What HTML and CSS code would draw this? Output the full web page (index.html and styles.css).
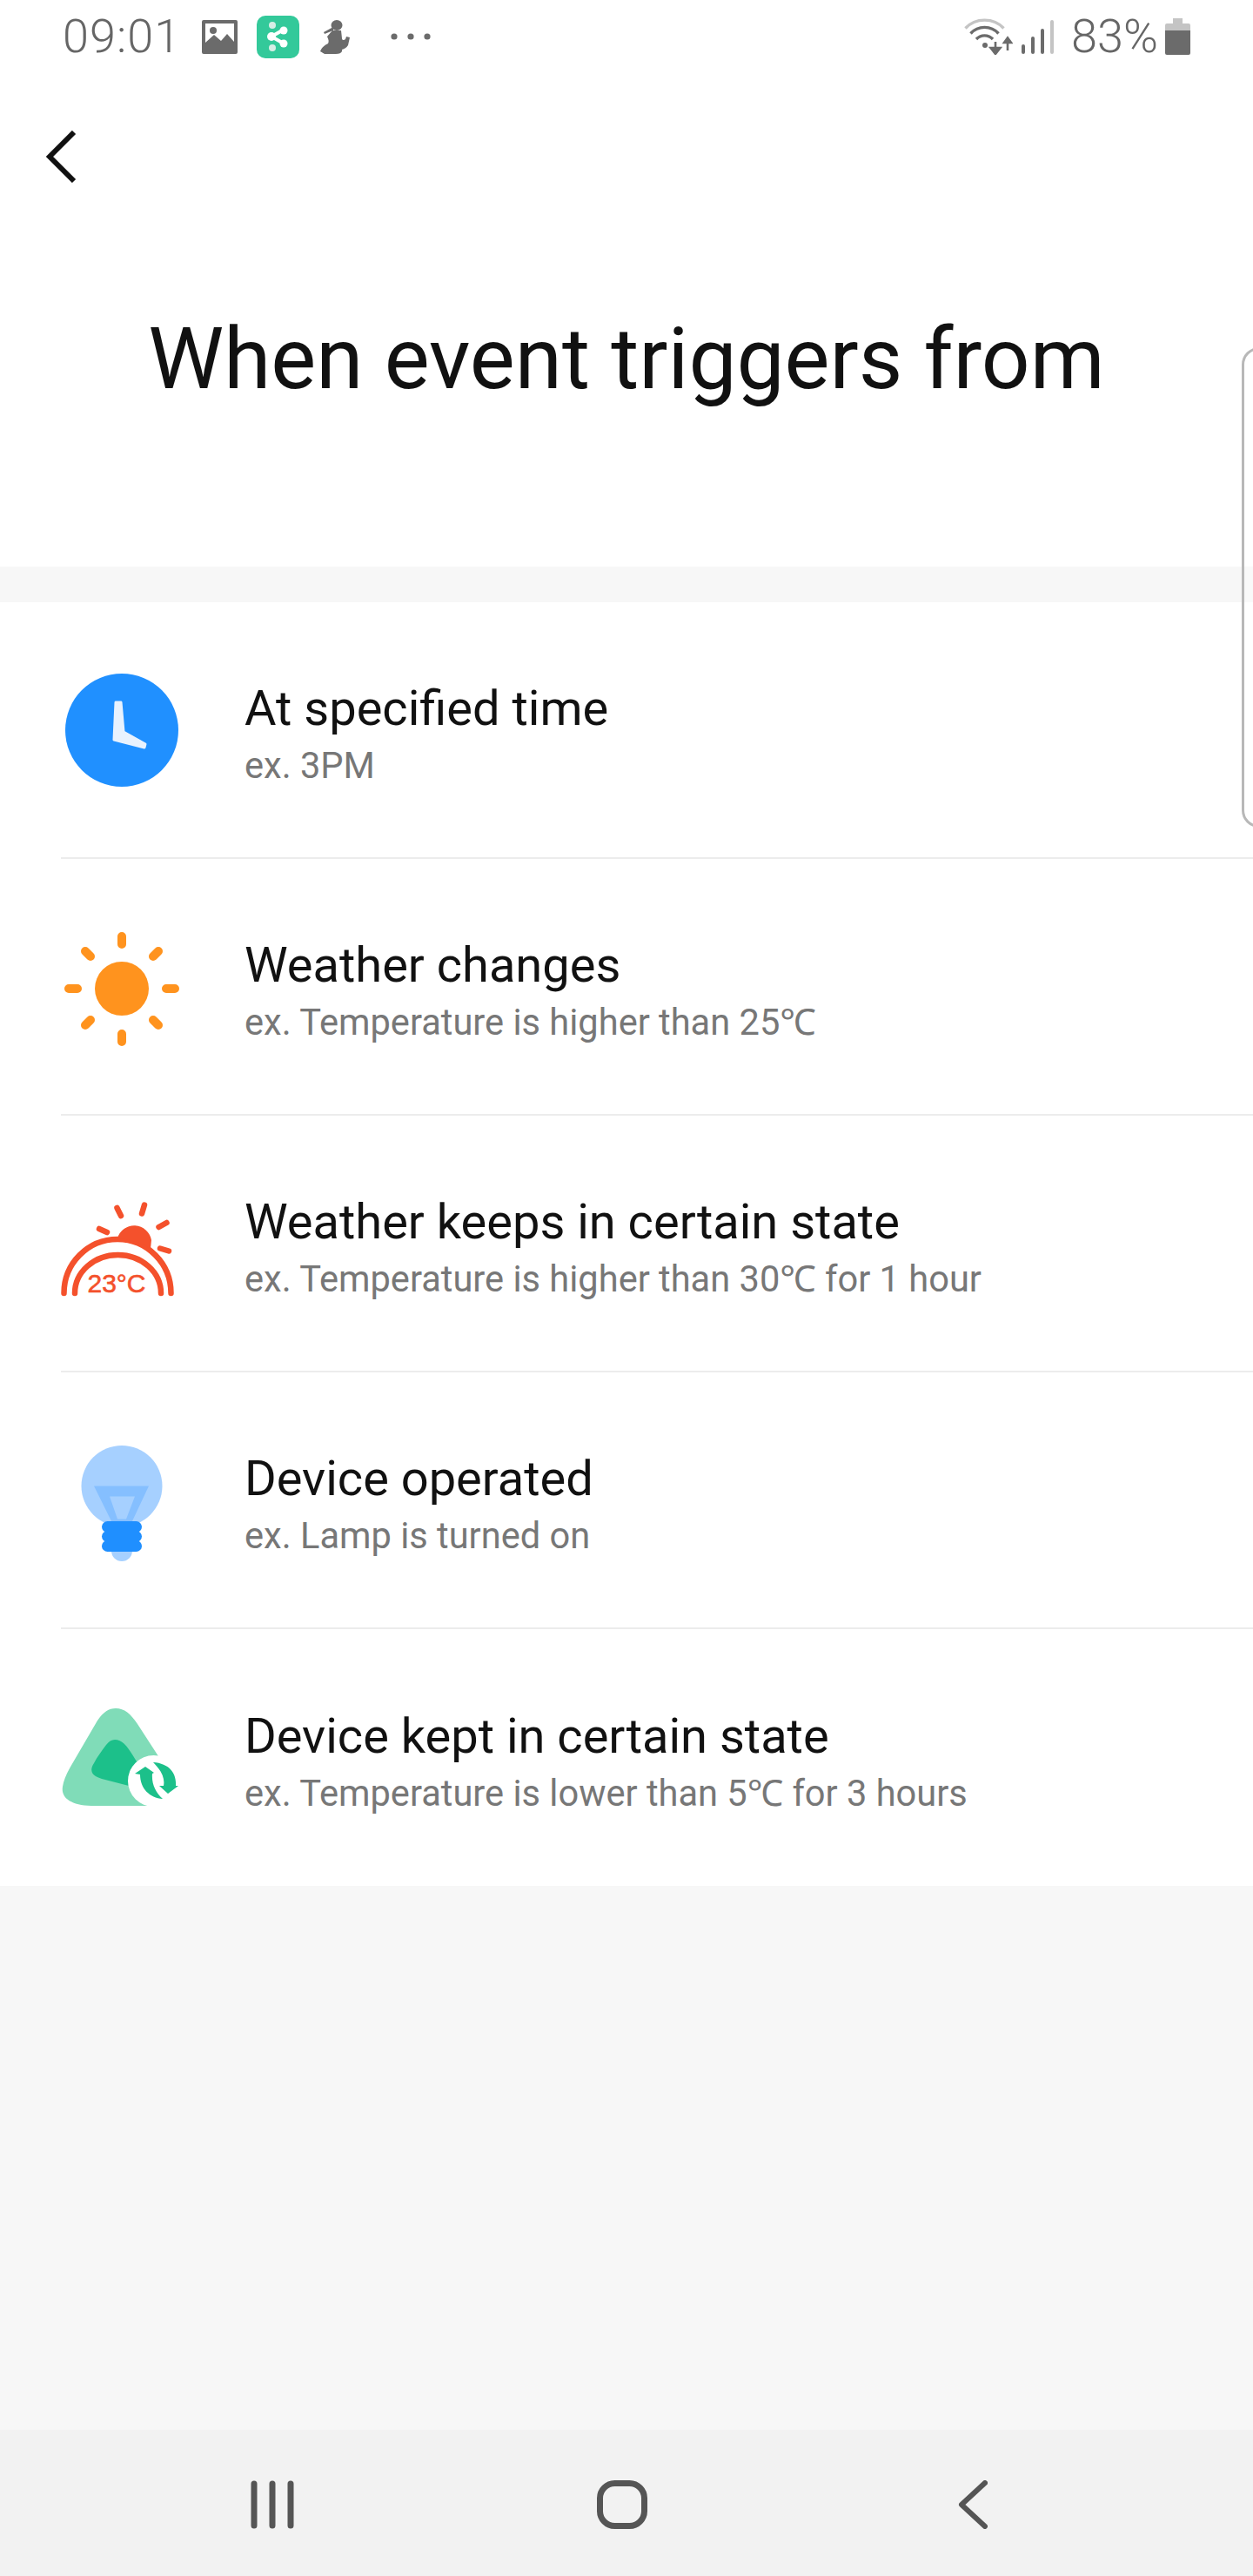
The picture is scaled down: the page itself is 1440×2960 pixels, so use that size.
FILE: index.html
```html
<!DOCTYPE html>
<html lang="en">
<head>
  <meta charset="UTF-8">
  <meta name="viewport" content="width=device-width, initial-scale=1">
  <title>When event triggers from</title>
  <link rel="stylesheet" href="styles.css">
</head>
<body>
  <div class="page">
    <header class="header">
      <div class="status">
        <div class="status-left">
          <span class="time">09:01</span>
          <svg class="st-image" width="41" height="39" viewBox="0 0 41 39">
            <path fill="#6b6b6b" fill-rule="evenodd" d="M2 0h37a2 2 0 0 1 2 2v35a2 2 0 0 1-2 2H2a2 2 0 0 1-2-2V2a2 2 0 0 1 2-2zM4 4v22l10-9 8 7 7-8 8 9V4z"/>
            <circle cx="13" cy="12" r="4" fill="#6b6b6b"/>
          </svg>
          <svg class="st-app" width="49" height="49" viewBox="0 0 49 49">
            <rect width="49" height="49" rx="10" fill="#33c99a"/>
            <path d="M31 16 17 24l14 8" fill="none" stroke="#fff" stroke-width="4"/>
            <circle cx="18" cy="11" r="4" fill="#d6eee6"/>
            <circle cx="18" cy="37" r="4" fill="#d6eee6"/>
            <circle cx="31" cy="17" r="4.5" fill="#fff"/>
            <circle cx="31" cy="32" r="4.5" fill="#fff"/>
            <circle cx="17" cy="24" r="5" fill="#fff"/>
          </svg>
          <svg class="st-person" width="36" height="39" viewBox="0 0 36 39">
            <ellipse cx="19" cy="6" rx="6.500" ry="6" fill="#6b6b6b"/>
            <path fill="#6b6b6b" d="M15 8 4 14l1 2 10-4z"/>
            <path fill="#6b6b6b" d="M14 12h10l1 9c0 2 2 3 4 1l1-3 4 1-2 9c-2 3-4 4-7 5v2c-1 2-3 3-7 3H5l-5-3c2-5 5-7 9-9 1-2 1-4-1-8z"/>
          </svg>
          <svg class="st-more" width="46" height="10" viewBox="0 0 46 10">
            <circle cx="4" cy="5" r="3.6" fill="#6b6b6b"/>
            <circle cx="23" cy="5" r="3.6" fill="#6b6b6b"/>
            <circle cx="42" cy="5" r="3.6" fill="#6b6b6b"/>
          </svg>
        </div>
        <div class="status-right">
          <svg class="st-wifi" width="56" height="42" viewBox="0 0 56 42" fill="none" stroke-width="3.4">
            <path d="M1.500 11.500C13 -1 34 -1 45.500 11.500" stroke="#c4c4c4"/>
            <path d="M7.500 17.500C16 8 31 8 39.500 17.500" stroke="#6b6b6b"/>
            <path d="M14 24C19 18.500 28 18.500 33 24" stroke="#6b6b6b"/>
            <circle cx="24" cy="31" r="3" fill="#6b6b6b"/>
            <path d="M36 27v12M30.500 34l5.500 7 5.500-7z" stroke="#6b6b6b" stroke-width="2.600" fill="#6b6b6b"/>
            <path d="M50 37V24M46 28l4-5.500 4 5.500z" stroke="#6b6b6b" stroke-width="2.600" fill="#6b6b6b"/>
          </svg>
          <svg class="st-signal" width="37" height="39" viewBox="0 0 37 39" stroke-width="4" stroke-linecap="round">
            <path d="M2 30v7M13 21v16M24 12v25" stroke="#6b6b6b"/>
            <path d="M35 2v35" stroke="#c4c4c4"/>
          </svg>
          <span class="battery-text">83%</span>
          <svg class="st-battery" width="29" height="42" viewBox="0 0 29 42">
            <path fill="#c4c4c4" d="M9 0h11v6h7a2 2 0 0 1 2 2v6H0V8a2 2 0 0 1 2-2h7z"/>
            <path fill="#6b6b6b" d="M0 14h29v26a2 2 0 0 1-2 2H2a2 2 0 0 1-2-2z"/>
          </svg>
        </div>
      </div>
      <div class="toolbar">
        <svg width="36" height="60" viewBox="0 0 36 60" fill="none">
          <path d="M33 2 5 30l28 28" stroke="#111" stroke-width="6"/>
        </svg>
      </div>
      <h1 class="title">When event triggers from</h1>
    </header>

    <div class="band"></div>

    <ul class="list">
      <li class="row">
        <svg class="row-icon" width="140" height="140" viewBox="0 0 140 140">
          <circle cx="70" cy="70" r="65" fill="#2090ff"/>
          <path d="M63 38h6l3 34 25 14-1 4-35-9z" fill="#e8f2fe" stroke="#e8f2fe" stroke-width="3" stroke-linejoin="round"/>
        </svg>
        <div class="row-text">
          <div class="row-title">At specified time</div>
          <div class="row-sub">ex. 3PM</div>
        </div>
      </li>
      <li class="row">
        <svg class="row-icon" width="140" height="140" viewBox="0 0 140 140" fill="none" stroke="#ff931e" stroke-width="10" stroke-linecap="round">
          <circle cx="70" cy="72" r="31" fill="#ff931e" stroke="none"/>
          <path d="M70 12v9M70 124v9M9 72h10M121 72h10M28 29l6 6M112 29l-6 6M28 114l6-6M112 114l-6-6"/>
        </svg>
        <div class="row-text">
          <div class="row-title">Weather changes</div>
          <div class="row-sub">ex. Temperature is higher than 25℃</div>
        </div>
      </li>
      <li class="row">
        <svg class="row-icon" width="140" height="140" viewBox="0 0 140 140" fill="none" stroke="#f4512c" stroke-linecap="round">
          <path d="M3.500 127A61.500 62 0 0 1 126.500 127M16 127A49.500 44 0 0 1 115 127" stroke-width="6.500"/>
          <path d="M65 64A20 20 0 0 1 104 66l-1 10c-10-7-22-11-38-12z" fill="#f4512c" stroke="none"/>
          <path d="M64.500 29l4.500 9M96 25.500l-3 10M121.500 46l-9 5M124 78.500l-10-3M53 57l-9-4" stroke-width="6.500"/>
          <text class="temp" x="64" y="126" text-anchor="middle">23°C</text>
        </svg>
        <div class="row-text">
          <div class="row-title">Weather keeps in certain state</div>
          <div class="row-sub">ex. Temperature is higher than 30℃ for 1 hour</div>
        </div>
      </li>
      <li class="row">
        <svg class="row-icon" width="140" height="140" viewBox="0 0 140 140">
          <circle cx="70" cy="53.500" r="46.500" fill="#a6d0ff"/>
          <path d="M58 120h24v8a12 12 0 0 1-24 0z" fill="#a6d0ff"/>
          <path fill="#85bfff" fill-rule="evenodd" d="M38 53.500h63L81 96H59zM56 65.500l9 26h10l10-26z"/>
          <rect x="47" y="94" width="46" height="13" rx="6.500" fill="#1f8fff"/>
          <rect x="47" y="105" width="46" height="13" rx="6.500" fill="#1f8fff"/>
          <rect x="47" y="116" width="46" height="13" rx="6.500" fill="#1f8fff"/>
        </svg>
        <div class="row-text">
          <div class="row-title">Device operated</div>
          <div class="row-sub">ex. Lamp is turned on</div>
        </div>
      </li>
      <li class="row">
        <svg class="row-icon" width="140" height="140" viewBox="0 0 140 140">
          <path d="M63 13C73 13 80 19 88 31L112 68 125 100 100 125H35C10 124 0 115 2 103 3 95 8 85 14 75L42 27C49 17 55 13 63 13z" fill="#80dcb8"/>
          <path d="M62 49C70 49 76 56 82 66L100 95 78 102 47 94C36 91 32 85 38 76 42 68 47 62 52 55 55 51 58 49 62 49z" fill="#1cc08a"/>
          <circle cx="106.500" cy="96.500" r="29.500" fill="#fff"/>
          <path d="M97 80 85 88l6 1c0 16 11 27 26 28-8-7-13-17-12-29l2-1z" fill="#1cc08a"/>
          <path d="M106 75c16 1 27 10 26 27h3l-12 9-10-9h5c2-10-4-19-12-27z" fill="#1cc08a"/>
        </svg>
        <div class="row-text">
          <div class="row-title">Device kept in certain state</div>
          <div class="row-sub">ex. Temperature is lower than 5℃ for 3 hours</div>
        </div>
      </li>
    </ul>

    <div class="filler"></div>

    <nav class="nav">
      <svg width="50" height="56" viewBox="0 0 50 56" stroke="#555" stroke-width="7" stroke-linecap="round">
        <path d="M4 4v48M25 4v48M46 4v48"/>
      </svg>
      <svg class="nav-home" width="58" height="56" viewBox="0 0 58 56" fill="none">
        <rect x="3.500" y="3.500" width="51" height="49" rx="17" stroke="#555" stroke-width="7"/>
      </svg>
      <svg class="nav-back" width="34" height="56" viewBox="0 0 34 56" fill="none">
        <path d="M31 3 4 28l27 25" stroke="#555" stroke-width="6" stroke-linecap="round" stroke-linejoin="round"/>
      </svg>
    </nav>

    <div class="edge-handle"></div>
  </div>
</body>
</html>
```

FILE: styles.css
```css
* { box-sizing: border-box; }
html, body { margin: 0; padding: 0; }
body { background: #fff; font-family: Roboto, "Noto Sans", sans-serif; color: #111; }

.page { position: relative; width: 1440px; height: 2960px; display: flex; flex-direction: column; overflow: hidden; background: #f7f7f7; }

.header { height: 651px; background: #fff; }
.status { height: 84px; padding: 0 72px 0 72px; display: flex; justify-content: space-between; align-items: center; color: #666; }
.status-left, .status-right { display: flex; align-items: center; }
.time { width: 131px; font-size: 54px; font-weight: 300; letter-spacing: 1px; line-height: 84px; white-space: nowrap; }
.st-image { margin-left: 29px; }
.st-app { margin-left: 22px; }
.st-person { margin-left: 24px; }
.st-more { margin-left: 45px; }
.st-signal { margin-left: 10px; }
.battery-text { margin-left: 20px; width: 95px; font-size: 54px; font-weight: 300; line-height: 84px; white-space: nowrap; }
.st-battery { margin-left: 13px; }

.toolbar { height: 90px; margin-top: 51px; padding-left: 52px; display: flex; align-items: center; }

.title { margin: 0; padding-top: 140px; text-align: center; font-size: 98px; font-weight: 400; line-height: 96px; white-space: nowrap; }

.band { height: 41px; background: #f7f7f7; }

.list { margin: 0; padding: 0; list-style: none; background: #fff; }
.row { height: 295px; margin-left: 70px; display: flex; align-items: center; gap: 71px; border-bottom: 2px solid #ececec; }
.row:last-child { border-bottom: 0; }
.row-icon { flex: none; }
.row-text { display: flex; flex-direction: column; padding-top: 14px; }
.row-title { font-size: 56px; line-height: 66px; color: #111; white-space: nowrap; }
.row-sub { margin-top: 3px; font-size: 41.6px; line-height: 60px; color: #777; white-space: nowrap; }
.temp { font-family: "Liberation Sans", Arial, sans-serif; font-size: 30px; fill: #f4512c; stroke: #f4512c; stroke-width: 0.6px; }

.filler { flex: 1; }

.nav { height: 168px; padding: 4px 0 0 288px; display: flex; align-items: center; background: #f2f2f2; }
.nav-home { margin-left: 348px; }
.nav-back { margin-left: 357px; }

.edge-handle { position: absolute; left: 1427px; top: 399px; width: 40px; height: 552px; border: 3px solid #b8b8b8; border-radius: 20px; background: rgba(255,255,255,0.25); }
```
